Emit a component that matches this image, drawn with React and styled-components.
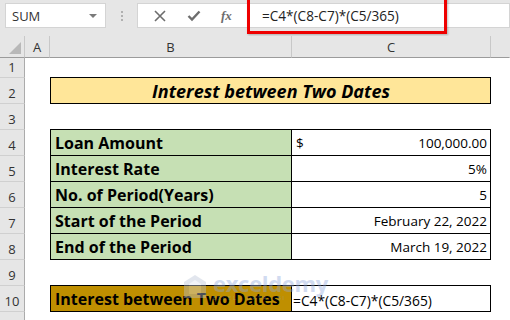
import React from 'react';
import styled, { createGlobalStyle } from 'styled-components';

const Global = createGlobalStyle`
    html, body {
        margin: 0;
        padding: 0;
        background: #ffffff;
        font-family: "Open Sans", "Noto Sans", sans-serif;
    }
`

const Page = styled.div`
    position: relative;
    width: 510px;
    height: 320px;
    overflow: hidden;
`

const Toolbar = styled.div`
    height: 36px;
    background: #e6e6e6;
    display: flex;
    align-items: flex-start;
    padding-top: 3px;
    box-sizing: border-box;
    position: relative;
`

const NameBox = styled.div`
    margin-left: 5px;
    width: 101px;
    height: 25px;
    box-sizing: border-box;
    background: #fff;
    border: 1px solid #d4d4d4;
    display: flex;
    align-items: center;
    justify-content: space-between;
    padding: 0 8px 0 6px;
    font-size: 13px;
    color: #333;
`

const Caret = styled.span`
    width: 0;
    height: 0;
    border-left: 4px solid transparent;
    border-right: 4px solid transparent;
    border-top: 4px solid #7a7a7a;
`

const Dots = styled.div`
    width: 31px;
    height: 25px;
    display: flex;
    flex-direction: column;
    align-items: center;
    justify-content: center;
    gap: 2px;
    span {
        width: 2px;
        height: 2px;
        background: #b0b0b0;
    }
`

const FxGroup = styled.div`
    width: 111px;
    height: 25px;
    box-sizing: border-box;
    background: #fff;
    border: 1px solid #d4d4d4;
    border-right: none;
    display: flex;
    align-items: center;
    justify-content: space-around;
    padding: 0 6px;
`

const Fx = styled.span`
    font-family: "Liberation Serif", serif;
    font-style: italic;
    font-size: 13px;
    color: #6d6d6d;
    font-weight: bold;
`

const FormulaInput = styled.div`
    flex: 1;
    height: 25px;
    background: #fff;
    border: 1px solid #d4d4d4;
    box-sizing: border-box;
    display: flex;
    align-items: center;
    padding-left: 13px;
    font-size: 13.6px;
    color: #222;
`

const Highlight = styled.div`
    position: absolute;
    left: 247px;
    top: -3px;
    width: 200px;
    height: 37px;
    box-sizing: border-box;
    border: 3px solid #ee0000;
    box-shadow: 1px 1px 2px rgba(0, 0, 0, 0.25);
`

const Sheet = styled.div`
    display: grid;
    grid-template-columns: 25px 25px 242px 199px 1fr;
    grid-template-rows: 22px 20px repeat(10, 26px);
`

const ColHead = styled.div`
    background: #e6e6e6;
    border-bottom: 1px solid #9b9b9b;
    border-right: 1px solid ${p => (p.$last ? 'transparent' : '#c8c8c8')};
    display: flex;
    align-items: center;
    justify-content: center;
    font-size: 13px;
    color: #333;
    position: relative;
`

const Corner = styled(ColHead)`
    border-right: 1px solid #c8c8c8;
    &::after {
        content: '';
        position: absolute;
        right: 3px;
        bottom: 3px;
        width: 0;
        height: 0;
        border-left: 12px solid transparent;
        border-bottom: 12px solid #b8b8b8;
    }
`

const RowHead = styled.div`
    background: #e6e6e6;
    border-right: 1px solid #ababab;
    border-bottom: 1px solid #d0d0d0;
    display: flex;
    align-items: flex-end;
    justify-content: center;
    padding-bottom: 2px;
    box-sizing: border-box;
    font-size: 13px;
    line-height: 16px;
    color: #333;
`

const Cell = styled.div`
    box-sizing: border-box;
    display: flex;
    align-items: flex-end;
    padding: 0 3px 1px 4px;
    font-size: ${p => p.$size || 14}px;
    line-height: 1.3;
    white-space: nowrap;
    color: #000;
    background: ${p => p.$bg || 'transparent'};
    font-weight: ${p => (p.$bold ? 700 : 400)};
    justify-content: ${p => p.$align || 'flex-start'};
    border-left: ${p => (p.$l ? '1px solid #000' : 'none')};
    border-right: ${p => (p.$r ? '1px solid #000' : 'none')};
    border-top: ${p => (p.$t ? '1px solid #000' : 'none')};
    border-bottom: ${p => (p.$b ? '1px solid #000' : 'none')};
    margin-top: ${p => (p.$t ? '-1px' : '0')};
`

const Title = styled(Cell)`
    grid-column: 3 / span 2;
    justify-content: center;
    font-style: italic;
    padding-bottom: 0;
`

const Value = styled.span`
    flex: 1;
    display: flex;
    justify-content: space-between;
    font-size: 13.5px;
    padding-bottom: 1px;
`

const Watermark = styled.div`
    position: absolute;
    left: 183px;
    top: 272px;
    display: flex;
    align-items: center;
    gap: 6px;
    opacity: 0.4;
    pointer-events: none;
`

const Brand = styled.div`
    display: flex;
    flex-direction: column;
    line-height: 1;
    color: #8ea6dc;
    font-family: "Open Sans", sans-serif;
    b {
        font-size: 22px;
        font-weight: 700;
        letter-spacing: -0.3px;
    }
    small {
        font-size: 6px;
        letter-spacing: 1.5px;
        margin-top: 1px;
        color: #9aa6bc;
    }
`

const table = [
    ['Loan Amount', '100,000.00', true],
    ['Interest Rate', '5%'],
    ['No. of Period(Years)', '5'],
    ['Start of the Period', 'February 22, 2022'],
    ['End of the Period', 'March 19, 2022'],
]

const Cross = () => (
    <svg width="12" height="12" viewBox="0 0 12 12">
        <path d="M1 1 L11 11 M11 1 L1 11" stroke="#6d6d6d" strokeWidth="1.6" fill="none" />
    </svg>
)

const Check = () => (
    <svg width="14" height="12" viewBox="0 0 14 12">
        <path d="M1.5 6 L5 9.5 L12.5 1.5" stroke="#6d6d6d" strokeWidth="2.4" fill="none" />
    </svg>
)

const Logo = () => (
    <svg width="24" height="26" viewBox="0 0 24 26">
        <path d="M12 1 L23 8 L23 24 L1 24 L1 8 Z" fill="#b9c3d6" />
        <path d="M12 6 L18 10 L18 20 L6 20 L6 10 Z" fill="#dde3ee" />
    </svg>
)

const App = () => {
    const rowNums = [1, 2, 3, 4, 5, 6, 7, 8, 9, 10, 11]
    return (
        <Page>
            <Global />
            <Toolbar>
                <NameBox>SUM<Caret /></NameBox>
                <Dots><span /><span /><span /></Dots>
                <FxGroup><Cross /><Check /><Fx>fx</Fx></FxGroup>
                <FormulaInput>=C4*(C8-C7)*(C5/365)</FormulaInput>
                <Highlight />
            </Toolbar>
            <Sheet>
                <Corner />
                <ColHead>A</ColHead>
                <ColHead>B</ColHead>
                <ColHead>C</ColHead>
                <ColHead $last />
                {rowNums.map(n => {
                    const cells = [<RowHead key={'h' + n}>{n}</RowHead>, <Cell key={'a' + n} />]
                    if (n === 2) {
                        cells.push(<Title key="t" $size={18} $bg="#ffe699" $bold $l $r $t $b>Interest between Two Dates</Title>)
                    } else if (n >= 4 && n <= 8) {
                        const [label, val, dollar] = table[n - 4]
                        cells.push(<Cell key="b" $size={16} $bg="#c6e0b4" $bold $l $r $t $b>{label}</Cell>)
                        cells.push(
                            <Cell key="c" $r $t $b>
                                <Value>
                                    <span>{dollar ? '$' : ''}</span>
                                    <span>{val}</span>
                                </Value>
                            </Cell>
                        )
                    } else if (n === 10) {
                        cells.push(<Cell key="b" $size={16} $bg="#bf8f00" $bold $l $r $t $b>Interest between Two Dates</Cell>)
                        cells.push(<Cell key="c" $size={13.8} $r $t $b style={{ paddingLeft: 1 }}>=C4*(C8-C7)*(C5/365)</Cell>)
                    } else {
                        cells.push(<Cell key="b" />, <Cell key="c" />)
                    }
                    cells.push(<Cell key="d" />)
                    return cells
                })}
            </Sheet>
            <Watermark>
                <Logo />
                <Brand>
                    <b>exceldemy</b>
                    <small>EXCEL · DATA · BI</small>
                </Brand>
            </Watermark>
        </Page>
    )
}

export default App;
